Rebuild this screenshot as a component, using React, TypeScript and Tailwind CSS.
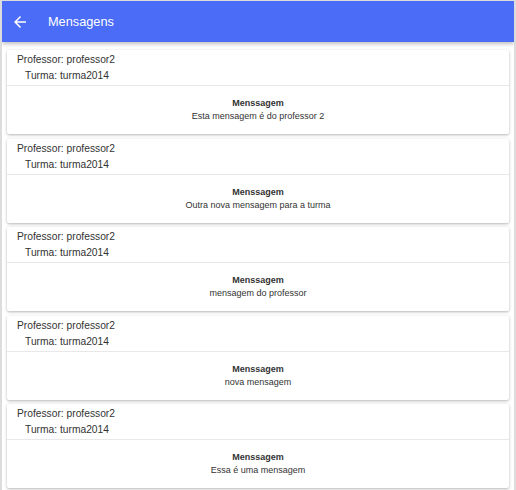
import React from 'react'

const mensagens = [
  'Esta mensagem é do professor 2',
  'Outra nova mensagem para a turma',
  'mensagem do professor',
  'nova mensagem',
  'Essa é uma mensagem',
]

const App = () => {
  return (
    <div
      className="w-[516px] h-[490px] overflow-hidden border-x-2 border-t border-[#dcdcdc] bg-white"
      style={{ fontFamily: '"Liberation Sans", Arial, sans-serif' }}
    >
      {/* Header */}
      <header className="h-[41px] bg-[#4a6cf6] flex items-center shadow-[0_2px_4px_rgba(0,0,0,0.25)] relative">
        <svg className="ml-[9px] w-[18px] h-[18px]" viewBox="0 0 24 24" fill="#fff">
          <path d="M20 11H7.83l5.59-5.59L12 4l-8 8 8 8 1.41-1.41L7.83 13H20v-2z" />
        </svg>
        <h1 className="ml-[19px] text-[12.75px] text-white">Mensagens</h1>
      </header>

      {/* Lista */}
      <div className="flex flex-col gap-[4.5px] pt-[8px] px-[5px]">
        {mensagens.map((msg, i) => (
          <div key={i} className="bg-white rounded-[2px] shadow-[0_1px_3px_rgba(0,0,0,0.3)]">
            <div className="h-[36px] border-b border-[#e8e8e8] pt-[2px] text-[10.25px] leading-[16px] text-[#333]">
              <div className="pl-[10px]">Professor: professor2</div>
              <div className="pl-[18px]">Turma: turma2014</div>
            </div>
            <div className="h-[48px] flex flex-col items-center justify-center text-[9px] leading-[13px] text-[#333]">
              <div className="font-bold">Menssagem</div>
              <div>{msg}</div>
            </div>
          </div>
        ))}
      </div>
    </div>
  )
}

export default App
